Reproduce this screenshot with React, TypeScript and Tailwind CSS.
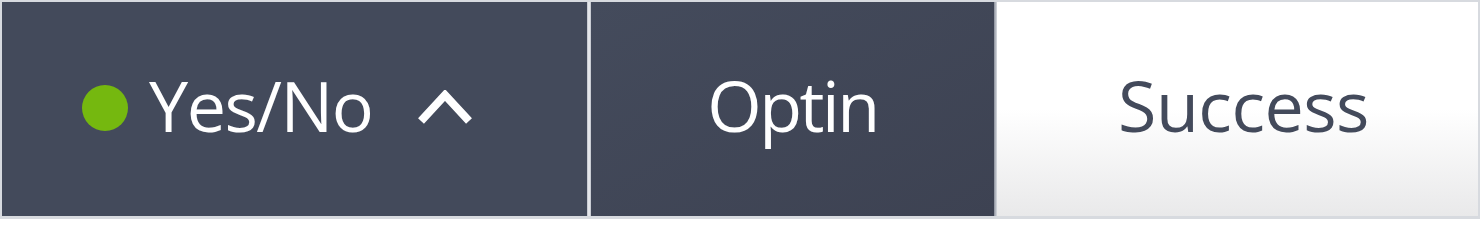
import React from "react";

export default function App() {
  return (
    <div className="w-[1480px] h-[219px] bg-[#d7dadf] p-[2px] pb-[3px] flex" style={{ fontFamily: '"Open Sans", "Liberation Sans", sans-serif' }}>
      <div className="w-[585px] h-full bg-[#434a5b] flex items-center pl-[80px] pb-[2px]">
        <span className="w-[46px] h-[46px] rounded-full bg-[#75b80f] shrink-0" />
        <span className="ml-[21px] text-white text-[70px] font-medium leading-none tracking-[-1.5px] mb-[6px]">Yes/No</span>
        <svg className="ml-[46px] mb-[2px]" width="54" height="34" viewBox="0 0 54 34">
          <polyline points="3,31 27,5 51,31" fill="none" stroke="white" strokeWidth="8" strokeLinejoin="miter" strokeLinecap="butt" />
        </svg>
      </div>
      <div className="w-[4px] h-full bg-[#e4e6ea] border-x border-[#c9ccd3]" />
      <div className="w-[403px] h-full bg-gradient-to-br from-[#444b5c] to-[#3d4252] flex items-center justify-center pb-[2px]">
        <span className="text-white text-[70px] font-medium leading-none tracking-[-2.5px] mb-[6px]">Optin</span>
      </div>
      <div className="w-[3px] h-full bg-gradient-to-r from-[#8a8f9b] to-[#d9dce1]" />
      <div className="flex-1 h-full bg-gradient-to-b from-white via-white to-[#e9e9ea] flex items-center justify-center pl-[12px] pb-[2px]">
        <span className="text-[#434a5b] text-[70px] font-medium leading-none tracking-[-0.5px] mb-[6px]">Success</span>
      </div>
    </div>
  );
}
